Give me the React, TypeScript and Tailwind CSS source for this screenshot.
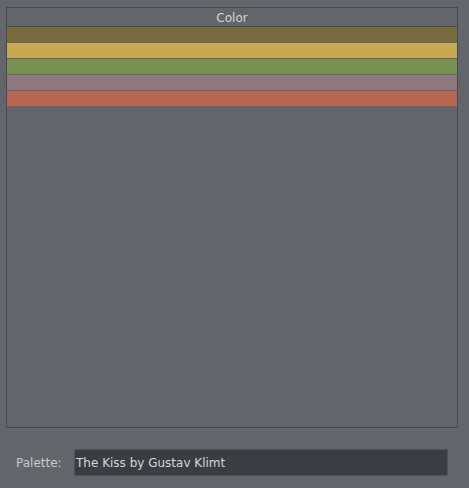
import React from 'react'

const COLORS = ['#7a6a40', '#c8a850', '#789050', '#907880', '#b86850']

export default function App() {
  return (
    <div
      className="flex h-[488px] w-[469px] flex-col bg-[#62666a] text-[12px] text-[#d4d6d8]"
      style={{ fontFamily: '"DejaVu Sans", sans-serif' }}
    >
      <div className="ml-[6px] mt-[7px] flex h-[421px] w-[452px] flex-col border border-[#45494d]">
        <div className="flex h-[19px] items-center justify-center border-b border-[#45494d] pt-[1px]">
          Color
        </div>
        <div className="flex flex-col gap-px">
          {COLORS.map(c => (
            <div key={c} className="h-[15px] w-full" style={{ backgroundColor: c }} />
          ))}
        </div>
      </div>
      <div className="mt-[21px] flex items-center">
        <span className="ml-[16px] w-[58px] text-[#c8cacc]">Palette:</span>
        <div className="flex h-[27px] w-[374px] items-center border border-[#505458] bg-[#3a3e42] pl-[1px]">
          The Kiss by Gustav Klimt
        </div>
      </div>
    </div>
  )
}
